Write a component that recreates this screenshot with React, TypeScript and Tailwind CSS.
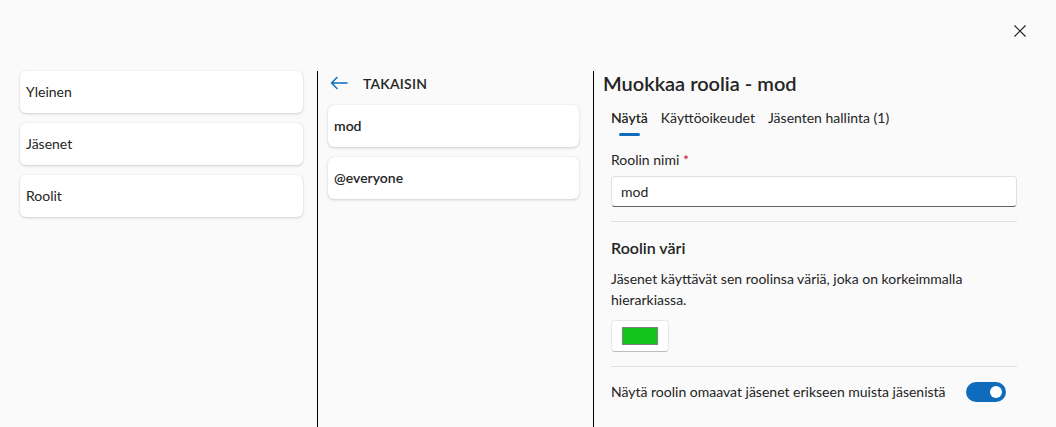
import { useState } from "react";

const font = { fontFamily: '"Segoe UI", Lato, "Noto Sans", sans-serif' };

const navItems = ["Yleinen", "Jäsenet", "Roolit"];
const roles = ["mod", "@everyone"];
const tabs = ["Näytä", "Käyttöoikeudet", "Jäsenten hallinta (1)"];

function Card({ children, bold }: { children: React.ReactNode; bold?: boolean }) {
  return (
    <div
      className={`h-[42px] flex items-center px-[6px] pb-[1px] bg-white rounded-md shadow-[0_1px_3px_rgba(0,0,0,0.16),0_0_1px_rgba(0,0,0,0.12)] text-[14px] text-[#242424] ${
        bold ? "font-semibold" : ""
      }`}
    >
      {children}
    </div>
  );
}

export default function App() {
  const [tab, setTab] = useState(0);
  const [separate, setSeparate] = useState(true);

  return (
    <div className="w-[1056px] h-[427px] bg-[#fafafa] text-[#242424] overflow-hidden flex flex-col" style={font}>
      {/* Close */}
      <div className="h-[71px] flex justify-end items-start pt-[23px] pr-[28px]">
        <button className="w-4 h-4 flex items-center justify-center text-[#242424]">
          <svg width="14" height="14" viewBox="0 0 14 14" fill="none" stroke="currentColor" strokeWidth="1.2">
            <path d="M1.5 1.5 L12.5 12.5 M12.5 1.5 L1.5 12.5" />
          </svg>
        </button>
      </div>

      <div className="flex flex-1 min-h-0">
        {/* Settings nav */}
        <div className="w-[317px] pl-[20px] pr-[14px] flex flex-col gap-[10px]">
          {navItems.map((n) => (
            <Card key={n}>{n}</Card>
          ))}
        </div>

        {/* Roles list */}
        <div className="w-[276px] border-l border-black pl-[10px] pr-[14px] flex flex-col">
          <button className="h-[24px] mb-[10px] flex items-center gap-[15px] pl-[2px] text-[14px] font-semibold tracking-[0.2px]">
            <svg width="18" height="14" viewBox="0 0 18 14" fill="none" stroke="#0f6cbd" strokeWidth="1.5" strokeLinecap="round" strokeLinejoin="round">
              <path d="M17 7 H1.5 M7 1.5 L1.5 7 L7 12.5" />
            </svg>
            TAKAISIN
          </button>
          <div className="flex flex-col gap-[10px]">
            {roles.map((r) => (
              <Card key={r} bold>
                {r}
              </Card>
            ))}
          </div>
        </div>

        {/* Edit role */}
        <div className="flex-1 border-l border-black pl-[11px] pr-[39px]">
          <h1 className="text-[20px] font-semibold leading-[26px] -mt-[1px] -ml-[2px]">Muokkaa roolia - mod</h1>
          <div className="flex gap-[13px] mt-[9px] ml-[6px] text-[14px]">
            {tabs.map((t, i) => (
              <button
                key={t}
                onClick={() => setTab(i)}
                className={`relative pb-[10px] pt-[2px] ${i === tab ? "font-semibold" : ""}`}
              >
                {t}
                {i === tab && (
                  <span className="absolute left-[8px] right-[8px] bottom-[2px] h-[3px] rounded-full bg-[#0f6cbd]" />
                )}
              </button>
            ))}
          </div>

          <div className="ml-[6px] mt-[12px]">
            <label className="block text-[14px] leading-[20px]">
              Roolin nimi <span className="text-[#c50f1f]">*</span>
            </label>
            <div className="mt-[6px] h-[31px] bg-white rounded-[4px] border border-[#e0e0e0] border-b-[#616161] flex items-center px-[9px] text-[14px]">
              mod
            </div>

            <div className="h-px bg-[#e0e0e0] mt-[14px]" />

            <h2 className="text-[16px] font-semibold mt-[15px] leading-[22px]">Roolin väri</h2>
            <p className="text-[14px] leading-[21px] mt-[9px] pr-[40px]">
              Jäsenet käyttävät sen roolinsa väriä, joka on korkeimmalla hierarkiassa.
            </p>
            <button className="mt-[10px] w-[58px] h-[32px] bg-white rounded-[4px] border border-[#e8e8e8] border-b-[#bdbdbd] flex items-center justify-center">
              <span className="w-[36px] h-[18px] bg-[#13c21b] border border-[#808080]" />
            </button>

            <div className="h-px bg-[#e0e0e0] mt-[14px]" />

            <div className="flex items-center justify-between mt-[14px] pr-[11px] text-[14px]">
              <span>Näytä roolin omaavat jäsenet erikseen muista jäsenistä</span>
              <button
                onClick={() => setSeparate(!separate)}
                className={`w-[40px] h-[20px] rounded-full flex items-center px-[4px] ${
                  separate ? "bg-[#0f6cbd] justify-end" : "bg-white border border-[#616161] justify-start"
                }`}
              >
                <span className={`w-[12px] h-[12px] rounded-full ${separate ? "bg-white" : "bg-[#616161]"}`} />
              </button>
            </div>
          </div>
        </div>
      </div>
    </div>
  );
}
